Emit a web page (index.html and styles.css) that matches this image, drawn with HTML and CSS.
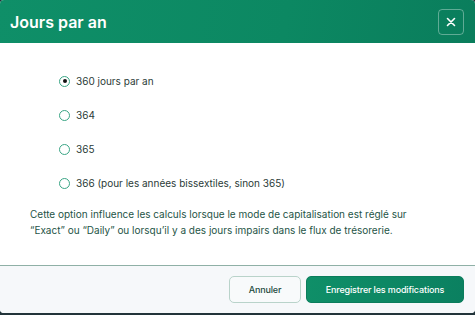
FILE: index.html
```html
<!DOCTYPE html>
<html lang="fr">
<head>
<meta charset="utf-8">
<link rel="stylesheet" href="styles.css">
</head>
<body>
<div class="modal">
  <header class="modal-header">
    <h1 class="title">Jours par an</h1>
    <button class="close" aria-label="Fermer">
      <svg width="12" height="12" viewBox="0 0 12 12"><path d="M2.5 2.5L9.5 9.5M9.5 2.5L2.5 9.5" stroke="#fff" stroke-width="1.6" stroke-linecap="round"/></svg>
    </button>
  </header>
  <main class="modal-body">
    <div class="options">
      <label class="option"><span class="radio checked"></span><span>360 jours par an</span></label>
      <label class="option"><span class="radio"></span><span>364</span></label>
      <label class="option"><span class="radio"></span><span>365</span></label>
      <label class="option"><span class="radio"></span><span>366 (pour les années bissextiles, sinon 365)</span></label>
    </div>
    <p class="note">Cette option influence les calculs lorsque le mode de capitalisation est réglé sur “Exact” ou “Daily” ou lorsqu’il y a des jours impairs dans le flux de trésorerie.</p>
  </main>
  <footer class="modal-footer">
    <button class="btn btn-secondary">Annuler</button>
    <button class="btn btn-primary">Enregistrer les modifications</button>
  </footer>
</div>
</body>
</html>
```
FILE: styles.css
```css
* { box-sizing: border-box; }
html, body { margin: 0; padding: 0; }
body {
  width: 475px;
  height: 315px;
  background: #22343a;
  font-family: Inter, "Noto Sans", sans-serif;
  overflow: hidden;
}
.modal {
  width: 475px;
  height: 313px;
  background: #fff;
  border-radius: 4px;
  overflow: hidden;
  display: flex;
  flex-direction: column;
}
.modal-header {
  height: 43px;
  flex: none;
  background: linear-gradient(100deg, #0f8f68 0%, #0c8862 60%, #0a7d5c 100%);
  display: flex;
  align-items: center;
  justify-content: space-between;
  padding: 0 11px 0 10px;
}
.title {
  margin: 0;
  color: #fff;
  font-size: 16px;
  font-weight: 600;
}
.close {
  width: 26px;
  height: 26px;
  border: 1px solid rgba(255,255,255,0.35);
  border-radius: 4px;
  background: transparent;
  display: flex;
  align-items: center;
  justify-content: center;
  padding: 0;
}
.modal-body {
  flex: 1;
  padding: 31px 48px 0 30px;
}
.options {
  display: flex;
  flex-direction: column;
  gap: 20px;
  padding-left: 29px;
}
.option {
  display: flex;
  align-items: center;
  gap: 6px;
  height: 14px;
  font-size: 10px;
  color: #2b3b38;
}
.radio {
  width: 11px;
  height: 11px;
  border-radius: 50%;
  border: 1px solid #3aa585;
  background: #fff;
  flex: none;
  display: flex;
  align-items: center;
  justify-content: center;
}
.radio.checked::after {
  content: "";
  width: 4px;
  height: 4px;
  border-radius: 50%;
  background: #111;
}
.note {
  margin: 16px 0 0 0;
  font-size: 10px;
  line-height: 16px;
  color: #1e5446;
}
.modal-footer {
  height: 48px;
  flex: none;
  border-top: 1px solid #8fb0a6;
  background: #f6f8fa;
  display: flex;
  align-items: center;
  justify-content: flex-end;
  gap: 5px;
  padding: 0 11px 0 0;
}
.btn {
  height: 27px;
  border-radius: 5px;
  font-family: Inter, "Noto Sans", sans-serif;
  font-size: 9px;
  font-weight: 500;
  letter-spacing: -0.15px;
  padding: 0;
}
.btn-secondary {
  width: 72px;
  background: #f8fafb;
  border: 1px solid #b9d3ca;
  color: #1d4a3e;
}
.btn-primary {
  width: 158px;
  background: linear-gradient(100deg, #0f8f68, #0b8060);
  border: 1px solid #0b7d5c;
  color: #fff;
}
```
